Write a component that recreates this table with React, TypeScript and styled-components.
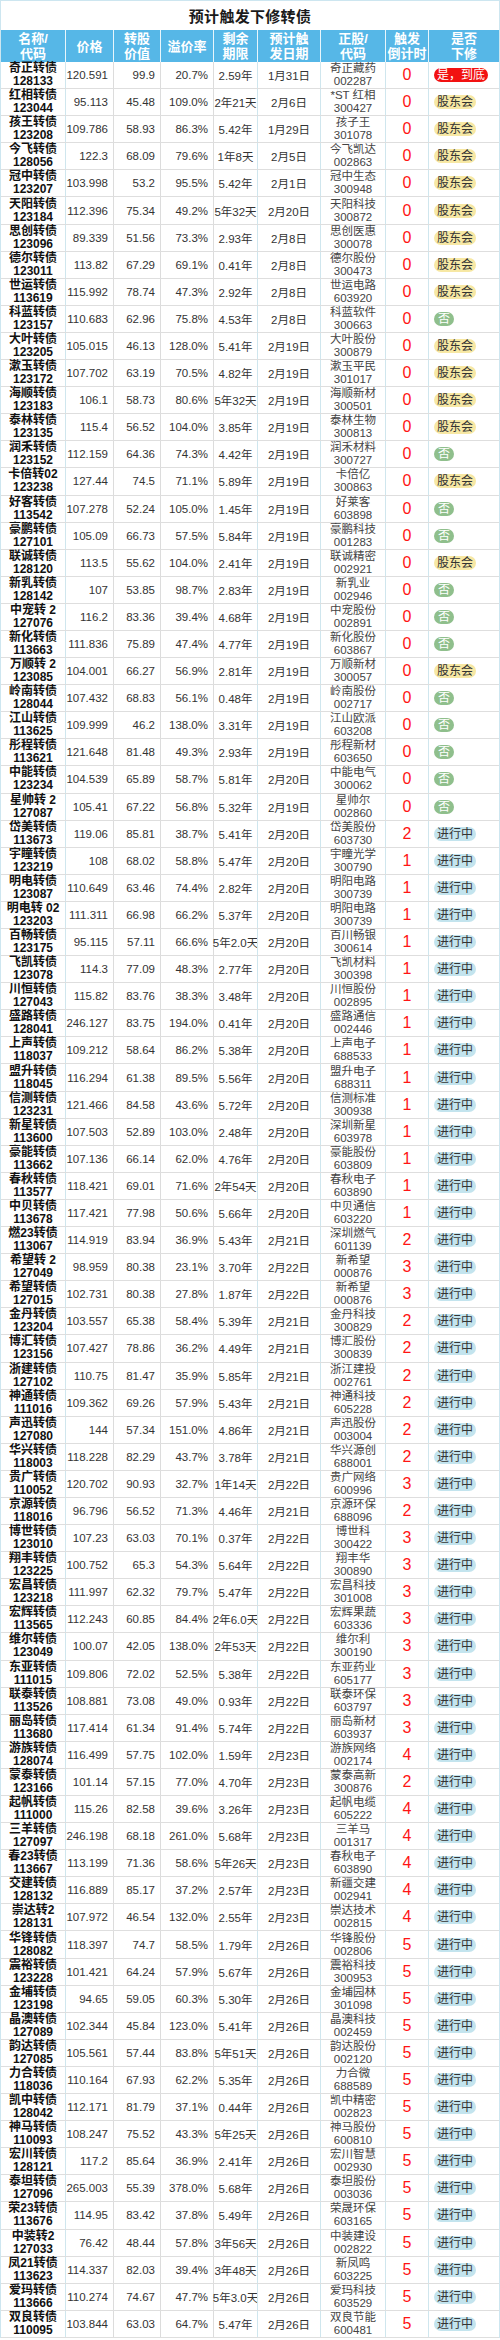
import React from "react";
import styled, { createGlobalStyle, css } from "styled-components";

const GlobalStyle = createGlobalStyle`
  html, body { margin: 0; padding: 0; background: #ffffff; }
  body { font-family: "Liberation Sans", "Noto Sans CJK SC", sans-serif; }
  * { box-sizing: border-box; }
`;

const COLS = "64px 48px 47px 53px 44px 63px 65px 43px 1fr";

const Wrapper = styled.div`
  width: 500px;
  border: 1px solid #cde6f0;
  border-bottom: none;
  background: #fff;
`;

const Title = styled.div`
  height: 29px;
  display: flex;
  align-items: center;
  justify-content: center;
  font-size: 15px;
  font-weight: bold;
  color: #1a1a1a;
  letter-spacing: 0.3px;
`;

const HeaderRow = styled.div`
  display: grid;
  grid-template-columns: ${COLS};
  height: 32px;
  background: #56b7e7;
`;

const HeaderCell = styled.div`
  display: flex;
  align-items: center;
  justify-content: center;
  text-align: center;
  white-space: pre-line;
  color: #ffffff;
  font-weight: bold;
  font-size: 13px;
  line-height: 15px;
  border-left: 1px solid #e8f6fc;
  &:first-child { border-left: none; }
`;

const Row = styled.div`
  display: grid;
  grid-template-columns: ${COLS};
  height: 27.1px;
  border-bottom: 1px solid #dedede;
`;

type Align = "left" | "center" | "right";

const Cell = styled.div<{ $align: Align; $grey?: boolean }>`
  display: flex;
  align-items: center;
  justify-content: ${(p) =>
    p.$align === "left" ? "flex-start" : p.$align === "right" ? "flex-end" : "center"};
  padding: ${(p) => (p.$align === "left" ? "0 0 0 5px" : p.$align === "right" ? "0 5px 0 0" : "0")};
  border-left: 1px solid ${(p) => (p.$grey ? "#dcdcdc" : "#cfe6ee")};
  white-space: nowrap;
  font-size: 11.5px;
  color: #333;
  min-width: 0;
`;

const NameCell = styled.div`
  display: flex;
  flex-direction: column;
  align-items: center;
  justify-content: center;
  font-weight: bold;
  font-size: 12px;
  line-height: 13px;
  color: #111;
  white-space: nowrap;
`;

const StockCell = styled(Cell)`
  flex-direction: column;
  line-height: 13px;
  color: #444;
`;

const Count = styled(Cell)`
  font-size: 16px;
  color: #ff1414;
`;

type Status = "d" | "g" | "n" | "p";

const badgeVariants: Record<Status, ReturnType<typeof css>> = {
  d: css`
    background: #f21111;
    color: #fff;
  `,
  g: css`
    background: #f7e8a4;
    color: #333;
  `,
  n: css`
    background: #8fbf8c;
    color: #fff;
    padding: 0 4px;
  `,
  p: css`
    background: #c3e4ee;
    color: #333;
  `,
};

const Badge = styled.span<{ $v: Status }>`
  display: inline-block;
  height: 14px;
  line-height: 14px;
  padding: 0 3px;
  border-radius: 7px;
  font-size: 12px;
  white-space: nowrap;
  ${(p) => badgeVariants[p.$v]}
`;

const badgeText: Record<Status, string> = {
  d: "是，到底",
  g: "股东会",
  n: "否",
  p: "进行中",
};

const headers = [
  "名称/\n代码",
  "价格",
  "转股\n价值",
  "溢价率",
  "剩余\n期限",
  "预计触\n发日期",
  "正股/\n代码",
  "触发\n倒计时",
  "是否\n下修",
];

const raw = `奇正转债|128133|120.591|99.9|20.7%|2.59年|1月31日|奇正藏药|002287|0|d
红相转债|123044|95.113|45.48|109.0%|2年21天|2月6日|*ST 红相|300427|0|g
孩王转债|123208|109.786|58.93|86.3%|5.42年|1月29日|孩子王|301078|0|g
今飞转债|128056|122.3|68.09|79.6%|1年8天|2月5日|今飞凯达|002863|0|g
冠中转债|123207|103.998|53.2|95.5%|5.42年|2月1日|冠中生态|300948|0|g
天阳转债|123184|112.396|75.34|49.2%|5年32天|2月20日|天阳科技|300872|0|g
思创转债|123096|89.339|51.56|73.3%|2.93年|2月8日|思创医惠|300078|0|g
德尔转债|123011|113.82|67.29|69.1%|0.41年|2月8日|德尔股份|300473|0|g
世运转债|113619|115.992|78.74|47.3%|2.92年|2月8日|世运电路|603920|0|g
科蓝转债|123157|110.683|62.96|75.8%|4.53年|2月8日|科蓝软件|300663|0|n
大叶转债|123205|105.015|46.13|128.0%|5.41年|2月19日|大叶股份|300879|0|g
漱玉转债|123172|107.702|63.19|70.5%|4.82年|2月19日|漱玉平民|301017|0|g
海顺转债|123183|106.1|58.73|80.6%|5年32天|2月19日|海顺新材|300501|0|g
泰林转债|123135|115.4|56.52|104.0%|3.85年|2月19日|泰林生物|300813|0|g
润禾转债|123152|112.159|64.36|74.3%|4.42年|2月19日|润禾材料|300727|0|n
卡倍转02|123238|127.44|74.5|71.1%|5.89年|2月19日|卡倍亿|300863|0|g
好客转债|113542|107.278|52.24|105.0%|1.45年|2月19日|好莱客|603898|0|n
豪鹏转债|127101|105.09|66.73|57.5%|5.84年|2月19日|豪鹏科技|001283|0|n
联诚转债|128120|113.5|55.62|104.0%|2.41年|2月19日|联诚精密|002921|0|g
新乳转债|128142|107|53.85|98.7%|2.83年|2月19日|新乳业|002946|0|n
中宠转 2|127076|116.2|83.36|39.4%|4.68年|2月19日|中宠股份|002891|0|n
新化转债|113663|111.836|75.89|47.4%|4.77年|2月19日|新化股份|603867|0|n
万顺转 2|123085|104.001|66.27|56.9%|2.81年|2月19日|万顺新材|300057|0|g
岭南转债|128044|107.432|68.83|56.1%|0.48年|2月19日|岭南股份|002717|0|n
江山转债|113625|109.999|46.2|138.0%|3.31年|2月19日|江山欧派|603208|0|n
彤程转债|113621|121.648|81.48|49.3%|2.93年|2月19日|彤程新材|603650|0|n
中能转债|123234|104.539|65.89|58.7%|5.81年|2月20日|中能电气|300062|0|n
星帅转 2|127087|105.41|67.22|56.8%|5.32年|2月19日|星帅尔|002860|0|n
岱美转债|113673|119.06|85.81|38.7%|5.41年|2月20日|岱美股份|603730|2|p
宇瞳转债|123219|108|68.02|58.8%|5.47年|2月20日|宇瞳光学|300790|1|p
明电转债|123087|110.649|63.46|74.4%|2.82年|2月20日|明阳电路|300739|1|p
明电转 02|123203|111.311|66.98|66.2%|5.37年|2月20日|明阳电路|300739|1|p
百畅转债|123175|95.115|57.11|66.6%|5年2.0天|2月20日|百川畅银|300614|1|p
飞凯转债|123078|114.3|77.09|48.3%|2.77年|2月20日|飞凯材料|300398|1|p
川恒转债|127043|115.82|83.76|38.3%|3.48年|2月20日|川恒股份|002895|1|p
盛路转债|128041|246.127|83.75|194.0%|0.41年|2月20日|盛路通信|002446|1|p
上声转债|118037|109.212|58.64|86.2%|5.38年|2月20日|上声电子|688533|1|p
盟升转债|118045|116.294|61.38|89.5%|5.56年|2月20日|盟升电子|688311|1|p
信测转债|123231|121.466|84.58|43.6%|5.72年|2月20日|信测标准|300938|1|p
新星转债|113600|107.503|52.89|103.0%|2.48年|2月20日|深圳新星|603978|1|p
豪能转债|113662|107.136|66.14|62.0%|4.76年|2月20日|豪能股份|603809|1|p
春秋转债|113577|118.421|69.01|71.6%|2年54天|2月20日|春秋电子|603890|1|p
中贝转债|113678|117.421|77.98|50.6%|5.66年|2月20日|中贝通信|603220|1|p
燃23转债|113067|114.919|83.94|36.9%|5.43年|2月21日|深圳燃气|601139|2|p
希望转 2|127049|98.959|80.38|23.1%|3.70年|2月22日|新希望|000876|3|p
希望转债|127015|102.731|80.38|27.8%|1.87年|2月22日|新希望|000876|3|p
金丹转债|123204|103.557|65.38|58.4%|5.39年|2月21日|金丹科技|300829|2|p
博汇转债|123156|107.427|78.86|36.2%|4.49年|2月21日|博汇股份|300839|2|p
浙建转债|127102|110.75|81.47|35.9%|5.85年|2月21日|浙江建投|002761|2|p
神通转债|111016|109.362|69.26|57.9%|5.43年|2月21日|神通科技|605228|2|p
声迅转债|127080|144|57.34|151.0%|4.86年|2月21日|声迅股份|003004|2|p
华兴转债|118003|118.228|82.29|43.7%|3.78年|2月21日|华兴源创|688001|2|p
贵广转债|110052|120.702|90.93|32.7%|1年14天|2月22日|贵广网络|600996|3|p
京源转债|118016|96.796|56.52|71.3%|4.46年|2月21日|京源环保|688096|2|p
博世转债|123010|107.23|63.03|70.1%|0.37年|2月22日|博世科|300422|3|p
翔丰转债|123225|100.752|65.3|54.3%|5.64年|2月22日|翔丰华|300890|3|p
宏昌转债|123218|111.997|62.32|79.7%|5.47年|2月22日|宏昌科技|301008|3|p
宏辉转债|113565|112.243|60.85|84.4%|2年6.0天|2月22日|宏辉果蔬|603336|3|p
维尔转债|123049|100.07|42.05|138.0%|2年53天|2月22日|维尔利|300190|3|p
东亚转债|111015|109.806|72.02|52.5%|5.38年|2月22日|东亚药业|605177|3|p
联泰转债|113526|108.881|73.08|49.0%|0.93年|2月22日|联泰环保|603797|3|p
丽岛转债|113680|117.414|61.34|91.4%|5.74年|2月22日|丽岛新材|603937|3|p
游族转债|128074|116.499|57.75|102.0%|1.59年|2月23日|游族网络|002174|4|p
蒙泰转债|123166|101.14|57.15|77.0%|4.70年|2月23日|蒙泰高新|300876|2|p
起帆转债|111000|115.26|82.58|39.6%|3.26年|2月23日|起帆电缆|605222|4|p
三羊转债|127097|246.198|68.18|261.0%|5.68年|2月23日|三羊马|001317|4|p
春23转债|113667|113.199|71.36|58.6%|5年26天|2月23日|春秋电子|603890|4|p
交建转债|128132|116.889|85.17|37.2%|2.57年|2月23日|新疆交建|002941|4|p
崇达转2|128131|107.972|46.54|132.0%|2.55年|2月23日|崇达技术|002815|4|p
华锋转债|128082|118.397|74.7|58.5%|1.79年|2月26日|华锋股份|002806|5|p
震裕转债|123228|101.421|64.24|57.9%|5.67年|2月26日|震裕科技|300953|5|p
金埔转债|123198|94.65|59.05|60.3%|5.30年|2月26日|金埔园林|301098|5|p
晶澳转债|127089|102.344|45.84|123.0%|5.41年|2月26日|晶澳科技|002459|5|p
韵达转债|127085|105.561|57.44|83.8%|5年51天|2月26日|韵达股份|002120|5|p
力合转债|118036|110.164|67.93|62.2%|5.35年|2月26日|力合微|688589|5|p
凯中转债|128042|112.171|81.79|37.1%|0.44年|2月26日|凯中精密|002823|5|p
神马转债|110093|108.247|75.52|43.3%|5年25天|2月26日|神马股份|600810|5|p
宏川转债|128121|117.2|85.64|36.9%|2.41年|2月26日|宏川智慧|002930|5|p
泰坦转债|127096|265.003|55.39|378.0%|5.68年|2月26日|泰坦股份|003036|5|p
荣23转债|113676|114.95|83.42|37.8%|5.49年|2月26日|荣晟环保|603165|5|p
中装转2|127033|76.42|48.44|57.8%|3年56天|2月26日|中装建设|002822|5|p
凤21转债|113623|114.337|82.03|39.4%|3年48天|2月26日|新凤鸣|603225|5|p
爱玛转债|113666|110.274|74.67|47.7%|5年3.0天|2月26日|爱玛科技|603529|5|p
双良转债|110095|103.844|63.03|64.7%|5.47年|2月26日|双良节能|600481|5|p`;

type Bond = {
  name: string;
  code: string;
  price: string;
  value: string;
  premium: string;
  term: string;
  date: string;
  stock: string;
  stockCode: string;
  count: string;
  status: Status;
};

const bonds: Bond[] = raw.split("\n").map((line) => {
  const [name, code, price, value, premium, term, date, stock, stockCode, count, status] =
    line.split("|");
  return { name, code, price, value, premium, term, date, stock, stockCode, count, status: status as Status };
});

export default function App() {
  return (
    <>
      <GlobalStyle />
      <Wrapper>
        <Title>预计触发下修转债</Title>
        <HeaderRow>
          {headers.map((h) => (
            <HeaderCell key={h}>{h}</HeaderCell>
          ))}
        </HeaderRow>
        {bonds.map((b, i) => (
          <Row key={b.code + i}>
            <NameCell>
              <span>{b.name}</span>
              <span>{b.code}</span>
            </NameCell>
            <Cell $align="right" $grey={false}>{b.price}</Cell>
            <Cell $align="right" $grey>{b.value}</Cell>
            <Cell $align="right" $grey>{b.premium}</Cell>
            <Cell $align="center" $grey>{b.term}</Cell>
            <Cell $align="center">{b.date}</Cell>
            <StockCell $align="center">
              <span>{b.stock}</span>
              <span>{b.stockCode}</span>
            </StockCell>
            <Count $align="center">{b.count}</Count>
            <Cell $align="left">
              <Badge $v={b.status}>{badgeText[b.status]}</Badge>
            </Cell>
          </Row>
        ))}
      </Wrapper>
    </>
  );
}
